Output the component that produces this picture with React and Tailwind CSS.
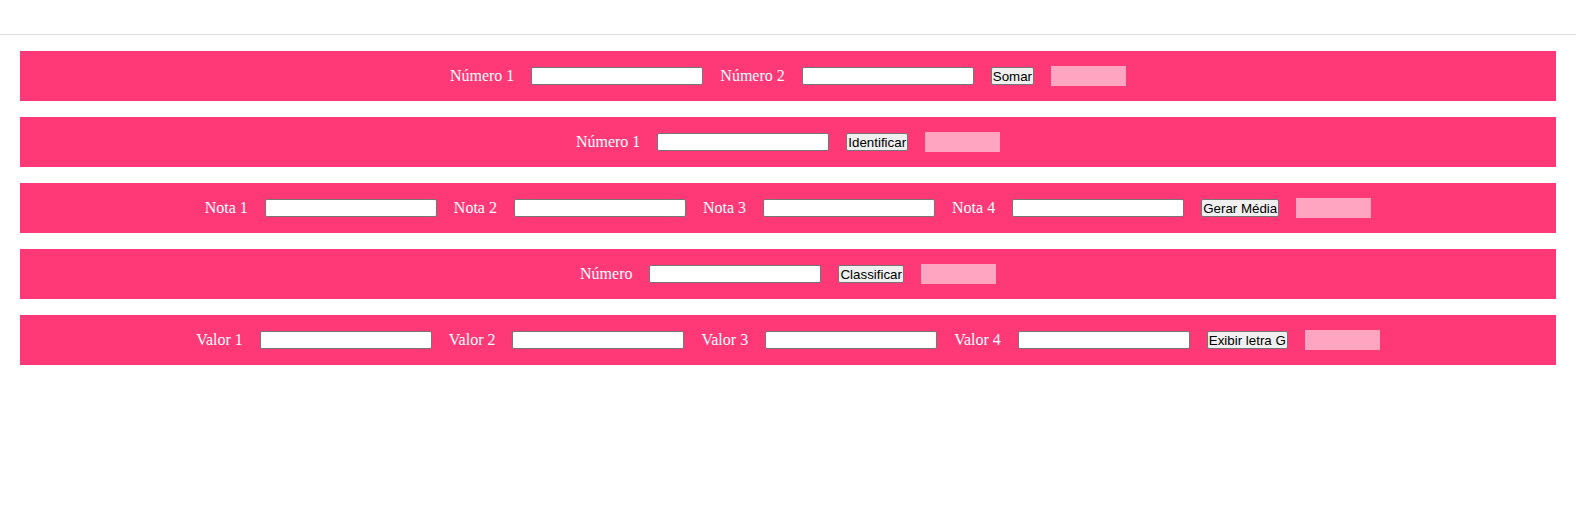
import React from 'react';

const rows = [
  { labels: ['Número 1', 'Número 2'], button: 'Somar' },
  { labels: ['Número 1'], button: 'Identificar' },
  { labels: ['Nota 1', 'Nota 2', 'Nota 3', 'Nota 4'], button: 'Gerar Média' },
  { labels: ['Número'], button: 'Classificar' },
  { labels: ['Valor 1', 'Valor 2', 'Valor 3', 'Valor 4'], button: 'Exibir letra G' },
];

const Row = ({ labels, button }) => (
  <div className="h-[50px] bg-[#ff3878] flex items-center justify-center gap-[17px]">
    {labels.map((label) => (
      <React.Fragment key={label}>
        <label className="text-white text-[16px] leading-[18px] font-['Liberation_Serif',serif]">{label}</label>
        <input
          type="text"
          className="w-[172px] h-[18px] bg-white border border-[#767676] rounded-[2px] px-[2px] text-[13px] outline-none"
        />
      </React.Fragment>
    ))}
    <button className="h-[18px] px-px bg-[#efefef] border border-[#767676] rounded-[2px] text-black text-[13.33px] leading-[15px] font-['Liberation_Sans',Arial,sans-serif]">
      {button}
    </button>
    <div className="w-[75px] h-[20px] bg-[#ffa5c1]"></div>
  </div>
);

const App = () => {
  return (
    <div className="min-h-[525px] bg-white">
      <div className="h-[35px] border-b border-[#dddddd]"></div>
      <div className="flex flex-col gap-4 px-5 pt-4">
        {rows.map((row, i) => (
          <Row key={i} {...row} />
        ))}
      </div>
    </div>
  );
};

export default App;
